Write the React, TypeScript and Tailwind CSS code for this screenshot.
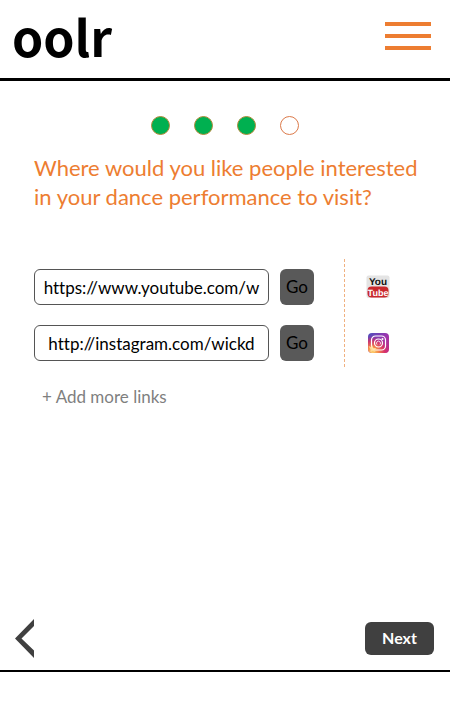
import React from "react";

type LinkRow = { id: string; name: string; value: string; icon: React.ReactNode };

function YouTubeIcon() {
  return (
    <svg width="24" height="24" viewBox="0 0 24 24" role="img" aria-label="YouTube">
      <rect x="0.5" y="0.5" width="23" height="22.5" rx="2" fill="#e4e4e4" />
      <text x="12" y="10" textAnchor="middle" fontSize="10" fontWeight="700" fill="#111" fontFamily="'Liberation Sans Narrow', 'Liberation Sans', sans-serif" textRendering="geometricPrecision">You</text>
      <rect x="1.5" y="11.5" width="21" height="11" rx="4" fill="#c9282d" />
      <text x="12" y="21" textAnchor="middle" fontSize="9" fontWeight="700" fill="#fff" fontFamily="'Liberation Sans Narrow', 'Liberation Sans', sans-serif" textRendering="geometricPrecision">Tube</text>
    </svg>
  );
}

function InstagramIcon() {
  return (
    <svg width="24" height="24" viewBox="0 0 24 24" role="img" aria-label="Instagram">
      <defs>
        <linearGradient id="ig-base" x1="0" y1="0" x2="1" y2="1">
          <stop offset="0" stopColor="#4c50bd" />
          <stop offset="0.5" stopColor="#9a35ae" />
          <stop offset="1" stopColor="#c92a7c" />
        </linearGradient>
        <radialGradient id="ig-glow" cx="0.2" cy="1" r="0.85">
          <stop offset="0" stopColor="#fdd36a" />
          <stop offset="0.35" stopColor="#f58a48" />
          <stop offset="0.7" stopColor="#e0355f" stopOpacity="0.8" />
          <stop offset="1" stopColor="#c92a7c" stopOpacity="0" />
        </radialGradient>
      </defs>
      <rect x="2" y="2" width="21" height="20" rx="4" fill="url(#ig-base)" />
      <rect x="2" y="2" width="21" height="20" rx="4" fill="url(#ig-glow)" />
      <g fill="none" stroke="#fff">
        <rect x="5.5" y="5" width="14" height="14" rx="4" strokeWidth="1.2" />
        <circle cx="12.5" cy="12" r="4" strokeWidth="1.2" />
        <path d="M11 13.500a2 2 0 1 1 3 0" strokeWidth="0.8" />
      </g>
      <circle cx="16.5" cy="8" r="1" fill="#fff" />
      <path d="M2.500 15l2.500 1 1-2 1.500 3 3 0-2 2 1 2-3-1-2 1 0-2.500z" fill="#ffe2a0" opacity="0.85" />
    </svg>
  );
}

const links: LinkRow[] = [
  { id: "link-youtube", name: "YouTube link", value: "https://www.youtube.com/w", icon: <YouTubeIcon /> },
  { id: "link-instagram", name: "Instagram link", value: "http://instagram.com/wickd", icon: <InstagramIcon /> },
];

const steps = [true, true, true, false];

export default function App() {
  return (
    <div className="flex min-h-screen flex-col bg-white pb-12 font-['Lato',sans-serif] text-black [font-variant-ligatures:none]">
      <header className="flex items-center justify-between border-b-3 border-black pr-[19px] pl-3">
        <span className="pb-2 font-['Noto_Sans_CJK_SC',sans-serif] text-[50px] leading-[70px] font-bold">oolr</span>
        <button type="button" aria-label="Menu" className="mb-1.5 flex w-[46px] flex-col gap-2">
          <span className="h-1 bg-[#ed7d31]" />
          <span className="h-1 bg-[#ed7d31]" />
          <span className="h-1 bg-[#ed7d31]" />
        </button>
      </header>

      <main className="flex-1">
        <ol aria-label="Progress" className="mt-[35px] flex justify-center gap-6">
          {steps.map((done, i) => (
            <li
              key={i}
              className={
                done
                  ? "h-[19px] w-[19px] rounded-full border border-[#b08a3a] bg-[#00b050]"
                  : "h-[19px] w-[19px] rounded-full border border-[#dc7a4a]"
              }
            />
          ))}
        </ol>

        <h1 className="mt-[18px] ml-[34px] text-[22px] leading-[29px] text-[#ed7d31]">
          Where would you like people interested
          <br />
          in your dance performance to visit?
        </h1>

        <div className="mt-12 flex pr-[60px] pl-[34px]">
          <div className="flex flex-1 flex-col gap-5 border-r border-dashed border-[#f0b080] pt-2.5 pr-[30px] pb-1.5">
            {links.map((link) => (
              <form key={link.id} className="flex gap-[11px]" onSubmit={(e) => e.preventDefault()}>
                <input
                  id={link.id}
                  type="text"
                  aria-label={link.name}
                  defaultValue={link.value}
                  className="h-9 min-w-0 flex-1 rounded-md border border-[#555] text-center text-[17px]"
                />
                <button type="submit" className="h-9 w-[34px] rounded-md bg-[#595959] text-[17px]">Go</button>
              </form>
            ))}
          </div>
          <div className="flex flex-col gap-8 pt-4 pl-[21px]">
            {links.map((link) => (
              <div key={link.id}>{link.icon}</div>
            ))}
          </div>
        </div>

        <button type="button" className="mt-[18px] ml-[42px] text-[17px] leading-6 text-[#7f7f7f]">+ Add more links</button>
      </main>

      <footer className="flex items-center justify-between border-b-2 border-black pr-4 pb-3 pl-[15px]">
        <button type="button" aria-label="Back">
          <svg width="20" height="40" viewBox="0 0 20 40" fill="#404040">
            <path d="M19 1v7L6.500 20.500 19 32.500V40L0 20.500z" />
          </svg>
        </button>
        <button type="button" className="h-[33px] w-[69px] rounded-md bg-[#404040] text-base font-bold text-white">Next</button>
      </footer>
    </div>
  );
}
